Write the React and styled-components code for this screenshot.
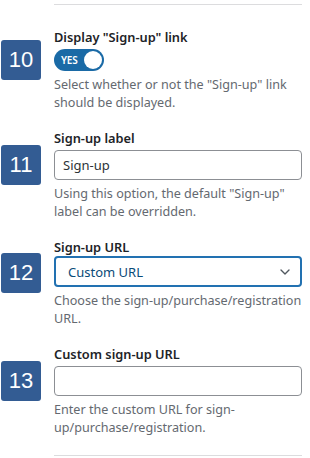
import styled, { createGlobalStyle } from 'styled-components';
import { ChevronDown } from 'lucide-react';

const GlobalStyle = createGlobalStyle`
  body {
    margin: 0;
    background: #fff;
    font-family: "Noto Sans", "Open Sans", sans-serif;
    color: #1d2327;
  }
`;

const settings = [
  {
    num: 10,
    label: 'Display "Sign-up" link',
    type: 'toggle',
    desc: 'Select whether or not the "Sign-up" link should be displayed.',
  },
  {
    num: 11,
    label: 'Sign-up label',
    type: 'text',
    value: 'Sign-up',
    desc: 'Using this option, the default "Sign-up" label can be overridden.',
  },
  {
    num: 12,
    label: 'Sign-up URL',
    type: 'select',
    value: 'Custom URL',
    desc: 'Choose the sign\u2011up/purchase/registration URL.',
  },
  {
    num: 13,
    label: 'Custom sign-up URL',
    type: 'text',
    value: '',
    desc: 'Enter the custom URL for sign-up/purchase/registration.',
  },
];

const App = () => {
  const renderControl = (item) => {
    if (item.type === 'toggle') {
      return (
        <Toggle>
          <ToggleText>YES</ToggleText>
          <Knob />
        </Toggle>
      );
    }
    if (item.type === 'select') {
      return (
        <Select>
          <SelectValue>{item.value}</SelectValue>
          <ChevronDown size={16} strokeWidth={2} color="#50575e" />
        </Select>
      );
    }
    return <TextInput defaultValue={item.value} />;
  };

  return (
    <>
      <GlobalStyle />
      <Page>
        <Divider />
        {settings.map((item, i) => (
          <Section key={item.num} $first={i === 0}>
            <Label>{item.label}</Label>
            <Badge>{item.num}</Badge>
            <Control $tight={item.type === 'select'}>{renderControl(item)}</Control>
            <Desc>{item.desc}</Desc>
          </Section>
        ))}
        <Divider $bottom />
      </Page>
    </>
  );
};

const Page = styled.div`
  width: 310px;
  padding: 4px 8px 0 1px;
  box-sizing: border-box;
`;

const Divider = styled.div`
  height: 1px;
  background: #dcdcde;
  margin-left: 53px;
  margin-top: ${(p) => (p.$bottom ? '18px' : '0')};
`;

const Section = styled.div`
  display: grid;
  grid-template-columns: 40px 1fr;
  column-gap: 13px;
  padding-top: ${(p) => (p.$first ? '23px' : '17px')};
`;

const Label = styled.div`
  grid-column: 2;
  grid-row: 1;
  font-size: 12.8px;
  font-weight: 600;
  line-height: 18px;
  color: #1d2327;
  margin-bottom: 3px;
`;

const Badge = styled.div`
  grid-column: 1;
  grid-row: 2;
  align-self: center;
  width: 40px;
  height: 40px;
  margin: -10px 0;
  border-radius: 3px;
  background: #335c93;
  color: #fff;
  font-family: "Liberation Sans", Arial, sans-serif;
  font-size: 22px;
  display: flex;
  align-items: center;
  justify-content: center;
`;

const Control = styled.div`
  grid-column: 2;
  grid-row: 2;
  margin-top: ${(p) => (p.$tight ? '-3px' : '0')};
  display: flex;
  align-items: center;
`;

const Toggle = styled.div`
  width: 50px;
  height: 22px;
  border-radius: 11px;
  background: #1a6aa6;
  display: flex;
  align-items: center;
  justify-content: space-between;
  padding: 0 2px 0 7px;
  box-sizing: border-box;
`;

const ToggleText = styled.span`
  color: #fff;
  font-size: 10px;
  font-weight: 600;
  letter-spacing: -0.2px;
`;

const Knob = styled.span`
  width: 18px;
  height: 18px;
  border-radius: 50%;
  background: #fff;
`;

const TextInput = styled.input`
  width: 100%;
  height: 30px;
  box-sizing: border-box;
  border: 1px solid #8c8f94;
  border-radius: 4px;
  padding: 0 8px;
  font-family: inherit;
  font-size: 13px;
  color: #2c3338;
  background: #fff;
  outline: none;
`;

const Select = styled.div`
  width: 100%;
  height: 31px;
  box-sizing: border-box;
  border: 2px solid #2271b1;
  border-radius: 4px;
  padding: 0 7px 0 12px;
  display: flex;
  align-items: center;
  justify-content: space-between;
`;

const SelectValue = styled.span`
  font-size: 13px;
  color: #0a4b78;
`;

const Desc = styled.p`
  grid-column: 2;
  grid-row: 3;
  margin: 5px 0 0;
  font-size: 12.6px;
  line-height: 18px;
  color: #646970;
`;

export default App;
